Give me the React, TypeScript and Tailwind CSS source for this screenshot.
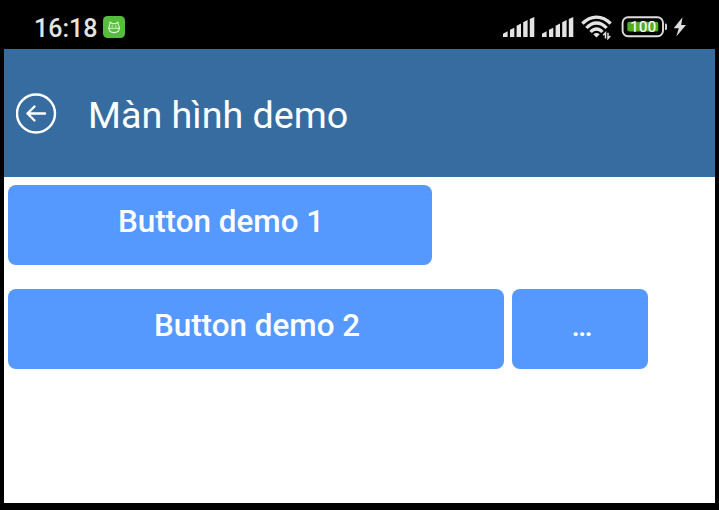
function Signal() {
  return (
    <svg width="32" height="22" viewBox="0 0 32 22" fill="#e4e4e4">
      <path d="M0 17.8 4.6 15.3V21H0ZM7 13.7 11.3 11.7V21H7ZM13.6 9.7 18 7.5V21H13.6ZM20.2 6.2 24.6 4.1V21H20.2ZM26.8 3 31.3.9V21H26.8Z" />
    </svg>
  );
}

function StatusBar() {
  return (
    <div className="flex h-[49px] shrink-0 items-start bg-black pl-[34px] text-[#e4e4e4]">
      <span className="mt-[13px] w-[63px] whitespace-nowrap text-[25px] font-medium leading-[32px]">16:18</span>
      <svg className="ml-[6px] mt-[16px]" width="22" height="22" viewBox="0 0 22 22" fill="none">
        <rect width="22" height="22" rx="4.5" fill="#55bd3b" />
        <g stroke="#e3f4d8" strokeWidth="1.1" strokeLinecap="round" strokeLinejoin="round">
          <path d="M6.7 9 7 6 9.2 7.6H12.8L15 6 15.4 9M6.7 9C5.9 10 5.8 11 5.8 12C5.8 15 8 16.6 11 16.6S16.4 15 16.4 12C16.4 11 16.2 10 15.4 9M5.5 12.3H16.7" />
          <path d="M9.2 10V10.2M12.9 10V10.2" strokeWidth="1.4" />
        </g>
      </svg>
      <div className="ml-auto mr-[32px] flex items-start">
        <div className="mt-[16px] flex gap-[7px]">
          <Signal />
          <Signal />
        </div>
        <svg className="ml-[7px] mt-[14px]" width="32" height="26" viewBox="0 0 32 26" fill="none">
          <g stroke="#e4e4e4" strokeWidth="3.3">
            <path d="M1.4 9.7C9.5 .8 21.5 .8 29.6 9.7" />
            <path d="M5.4 14C11.5 7.3 19.5 7.3 25.6 14" />
            <path d="M9.6 18C13.2 14 17.8 14 21.4 18" />
          </g>
          <path d="M12.3 20.2C14.2 18.6 16.8 18.6 18.7 20.2L15.5 23.5Z" fill="#e4e4e4" />
          <path d="M24.5 24.5V18.8L22.2 21.2M27 18.8V24.5L29.3 22" stroke="#e4e4e4" strokeWidth="1.5" />
        </svg>
        <svg className="ml-[8px] mt-[14px]" width="46" height="26" viewBox="0 0 46 26">
          <rect x="1.6" y="3.2" width="40.4" height="19" rx="5.5" fill="none" stroke="#dedede" strokeWidth="1.9" />
          <rect x="6.3" y="7.8" width="31" height="9.8" rx="2" fill="#4fad20" />
          <path d="M44 9.5H44.7Q46 9.5 46 11V14.5Q46 16 44.7 16H44Z" fill="#d0d0d0" />
          <text x="22.4" y="18" textAnchor="middle" fontSize="14.8" letterSpacing=".5" fill="#fff" stroke="#fff" strokeWidth=".2">100</text>
        </svg>
        <svg className="ml-[6px] mt-[17px]" width="14" height="20" viewBox="0 0 14 20">
          <path d="M9.5.3.7 11.2H5.8L3.3 19.5 13 8.1H8.2Z" fill="#dedede" />
        </svg>
      </div>
    </div>
  );
}

export default function App() {
  return (
    <div className="h-[510px] w-[719px] overflow-hidden bg-black font-[Roboto,sans-serif]">
      <StatusBar />
      <main className="mx-[4px] h-[454px] bg-white">
        <header className="flex h-[128px] items-center bg-[#376ca1] pl-[12px] text-white">
          <button aria-label="Quay lại">
            <svg width="41" height="41" viewBox="0 0 41 41" fill="none" stroke="currentColor" strokeWidth="2.4" strokeLinecap="round" strokeLinejoin="round">
              <circle cx="20" cy="20.5" r="19" />
              <path d="M29 20.5H11.5M18.5 13.5 11.5 20.5 18.5 27.5" />
            </svg>
          </button>
          <h1 className="ml-[31px] mt-[4px] whitespace-nowrap text-[37.7px] leading-[48px]">Màn hình demo</h1>
        </header>
        <div className="flex flex-col gap-6 px-1 pt-2 text-[31.4px] font-medium leading-[40px] text-white">
          <button className="h-20 w-[424px] rounded-lg bg-[#5599ff] pb-[7px] pl-[2px]">Button demo 1</button>
          <div className="flex gap-2">
            <button className="h-20 w-[496px] rounded-lg bg-[#5599ff] pb-[7px] pl-[2px]">Button demo 2</button>
            <button aria-label="Thêm" className="h-20 w-[136px] rounded-lg bg-[#5599ff] pb-[6px] pl-[4px] text-[29.5px]">…</button>
          </div>
        </div>
      </main>
    </div>
  );
}
